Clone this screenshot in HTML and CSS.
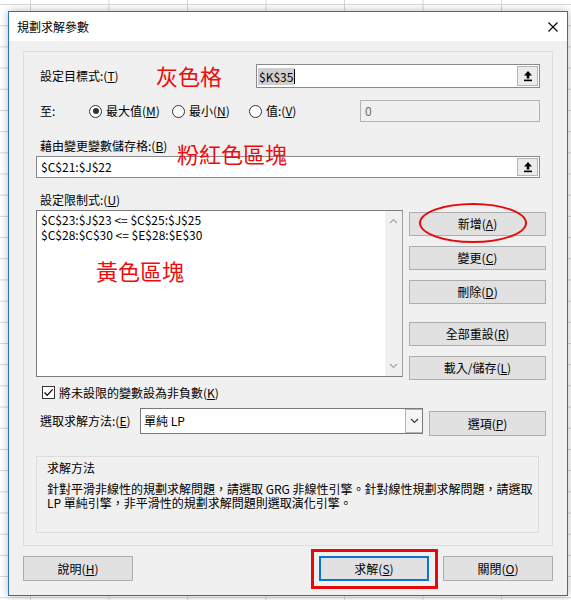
FILE: index.html
```html
<!DOCTYPE html>
<html lang="zh-Hant">
<head>
<meta charset="utf-8">
<title>規劃求解參數</title>
<link rel="stylesheet" href="styles.css">
</head>
<body>
<div class="dialog">
  <div class="titlebar">
    <span class="title">規劃求解參數</span>
    <svg class="close" viewBox="0 0 10 10" aria-hidden="true"><path d="M0.5 0.5 L9.5 9.5 M9.5 0.5 L0.5 9.5" stroke="#000" stroke-width="1.1" fill="none"/></svg>
  </div>
  <div class="body">
    <div class="group">
      <div class="row-target">
        <span class="label-target">設定目標式:(<u>T</u>)</span>
        <div class="refedit target">
          <span class="ref-text tight"><span class="sel">$K$35</span><span class="caret"></span></span>
          <span class="refbtn"><svg viewBox="0 0 10 12" aria-hidden="true"><path d="M5 1 L9 5.5 L6.3 5.5 L6.3 8.5 L3.7 8.5 L3.7 5.5 L1 5.5 Z" fill="#000"/><rect x="1" y="9.6" width="8" height="1.6" fill="#000"/></svg></span>
        </div>
      </div>
      <div class="row-radio">
        <span class="label-to">至:</span>
        <span class="radio r1"><span class="dot checked"></span><span class="rtext">最大值(<u>M</u>)</span></span>
        <span class="radio r2"><span class="dot"></span><span class="rtext">最小(<u>N</u>)</span></span>
        <span class="radio r3"><span class="dot"></span><span class="rtext">值:(<u>V</u>)</span></span>
        <div class="valuebox">0</div>
      </div>
      <div class="caption first">藉由變更變數儲存格:(<u>B</u>)</div>
      <div class="refedit changing">
        <span class="ref-text">$C$21:$J$22</span>
        <span class="refbtn"><svg viewBox="0 0 10 12" aria-hidden="true"><path d="M5 1 L9 5.5 L6.3 5.5 L6.3 8.5 L3.7 8.5 L3.7 5.5 L1 5.5 Z" fill="#000"/><rect x="1" y="9.6" width="8" height="1.6" fill="#000"/></svg></span>
      </div>
      <div class="caption second">設定限制式:(<u>U</u>)</div>
      <div class="constraints">
        <div class="listbox">
          <div class="items">
            <div class="item">$C$23:$J$23 &lt;= $C$25:$J$25</div>
            <div class="item">$C$28:$C$30 &lt;= $E$28:$E$30</div>
          </div>
          <div class="vscroll">
            <svg class="chev" viewBox="0 0 9 6" aria-hidden="true"><path d="M1 5 L4.5 1.5 L8 5" stroke="#a6a6a6" stroke-width="1.2" fill="none"/></svg>
            <svg class="chev" viewBox="0 0 9 6" aria-hidden="true"><path d="M1 1 L4.5 4.5 L8 1" stroke="#a6a6a6" stroke-width="1.2" fill="none"/></svg>
          </div>
        </div>
        <div class="side">
          <div class="btn"><span>新增(<u>A</u>)</span></div>
          <div class="btn gap10"><span>變更(<u>C</u>)</span></div>
          <div class="btn gap10"><span>刪除(<u>D</u>)</span></div>
          <div class="btn gap18"><span>全部重設(<u>R</u>)</span></div>
          <div class="btn gap10"><span>載入/儲存(<u>L</u>)</span></div>
        </div>
      </div>
      <div class="check">
        <span class="box"><svg viewBox="0 0 11 11" aria-hidden="true"><path d="M1.5 5.5 L4.2 8.3 L9.6 2.4" stroke="#000" stroke-width="1.2" fill="none"/></svg></span>
        <span>將未設限的變數設為非負數(<u>K</u>)</span>
      </div>
      <div class="method">
        <span class="label-method">選取求解方法:(<u>E</u>)</span>
        <div class="select">
          <span class="select-text">單純 LP</span>
          <span class="select-arrow"><svg viewBox="0 0 9 6" aria-hidden="true"><path d="M1 1 L4.5 4.5 L8 1" stroke="#333" stroke-width="1.1" fill="none"/></svg></span>
        </div>
        <div class="btn options"><span>選項(<u>P</u>)</span></div>
      </div>
      <div class="desc">
        <div class="desc-title">求解方法</div>
        <div class="desc-text">針對平滑非線性的規劃求解問題，請選取 GRG 非線性引擎。針對線性規劃求解問題，請選取<br>LP 單純引擎，非平滑性的規劃求解問題則選取演化引擎。</div>
      </div>
    </div>
    <div class="footer">
      <div class="btn foot"><span>說明(<u>H</u>)</span></div>
      <div class="foot-right">
        <div class="btn foot default"><span>求解(<u>S</u>)</span></div>
        <div class="btn foot"><span>關閉(<u>O</u>)</span></div>
      </div>
    </div>
  </div>
  <span class="note note-gray">灰色格</span>
  <span class="note note-pink">粉紅色區塊</span>
  <span class="note note-yellow">黃色區塊</span>
  <span class="mark-ellipse"></span>
  <span class="mark-rect"></span>
</div>
</body>
</html>
```
FILE: styles.css
```css
html, body {
  margin: 0;
}
body {
  width: 571px;
  height: 600px;
  box-sizing: border-box;
  padding: 11px 0 0 8px;
  overflow: hidden;
  font-family: "Noto Sans CJK TC", "Noto Sans", sans-serif;
  font-size: 12px;
  color: #000;
  background-color: #fff;
  background-image:
    linear-gradient(to right, #d6d6d6 1px, transparent 1px),
    linear-gradient(to bottom, #d6d6d6 1px, transparent 1px);
  background-size: 78.5px 100%, 100% 21.2px;
  background-position: 30px 0, 0 4px;
}
u { text-decoration: underline; text-underline-offset: 1px; }

.dialog {
  width: 560px;
  height: 585px;
  box-sizing: border-box;
  border: 1px solid #2a6fc6;
  background: #f0f0f0;
  position: relative;
  display: flex;
  flex-direction: column;
  box-shadow: 0 0 8px rgba(0, 0, 0, 0.28);
}
.titlebar {
  flex: none;
  height: 29px;
  background: #fff;
  display: flex;
  align-items: center;
  justify-content: space-between;
  padding: 0 9px 0 8px;
}
.title { line-height: 16px; }
.close { width: 10px; height: 10px; }

.body { padding: 10px 14px 0; }
.group {
  height: 495px;
  box-sizing: border-box;
  border: 1px solid #dcdcdc;
  padding: 12px 6px 0 12px;
  display: flex;
  flex-direction: column;
}

.row-target {
  height: 24px;
  display: flex;
  align-items: center;
}
.label-target {
  width: 220px;
  box-sizing: border-box;
  padding-left: 4px;
  line-height: 16px;
}
.refedit {
  box-sizing: border-box;
  border: 1px solid #8a8a8a;
  background: #fff;
  display: flex;
  align-items: center;
  justify-content: space-between;
}
.refedit.target { width: 284px; height: 24px; }
.refedit.changing { width: 504px; height: 22px; margin-top: 2px; }
.ref-text { padding-left: 4px; line-height: 16px; display: flex; align-items: center; }
.ref-text.tight { padding-left: 1px; }
.sel { background: #cfcfcf; padding: 0 1px 0 1px; line-height: 17px; }
.caret { width: 1px; height: 15px; background: #000; }
.refbtn {
  width: 21px;
  height: calc(100% - 2px);
  margin-right: 1px;
  box-sizing: border-box;
  border: 1px solid #b4b4b4;
  background: #ececec;
  display: flex;
  align-items: center;
  justify-content: center;
}
.refbtn svg { width: 10px; height: 12px; }

.row-radio {
  margin-top: 12px;
  height: 22px;
  display: flex;
  align-items: center;
  line-height: 16px;
}
.label-to { width: 53px; box-sizing: border-box; padding-left: 4px; }
.radio { display: flex; align-items: center; gap: 4px; }
.radio.r1 { width: 83px; }
.radio.r2 { width: 77px; }
.radio.r3 { width: 111px; }
.rtext { white-space: nowrap; }
.dot {
  width: 13px;
  height: 13px;
  box-sizing: border-box;
  border: 1px solid #333;
  border-radius: 50%;
  position: relative;
  background: #fff;
  flex: none;
}
.dot.checked::after {
  content: "";
  position: absolute;
  inset: 2.5px;
  border-radius: 50%;
  background: #333;
}
.valuebox {
  width: 180px;
  height: 22px;
  box-sizing: border-box;
  border: 1px solid #b2b2b2;
  background: #f0f0f0;
  color: #6d6d6d;
  padding-left: 4px;
  line-height: 20px;
}

.caption { height: 16px; line-height: 16px; padding-left: 4px; }
.caption.first { margin-top: 16px; }
.caption.second { margin-top: 14px; }

.constraints {
  margin-top: 2px;
  height: 170px;
  display: flex;
  gap: 6px;
  align-items: flex-start;
}
.listbox {
  width: 367px;
  height: 167px;
  box-sizing: border-box;
  border: 1px solid #7a7a7a;
  border-right-color: #a0a0a0;
  background: #fff;
  display: flex;
}
.items { flex: 1; padding: 1px 0 0 4px; line-height: 15px; }
.vscroll {
  width: 17px;
  background: #f0f0f0;
  display: flex;
  flex-direction: column;
  justify-content: space-between;
  align-items: center;
  padding: 7px 0;
}
.chev { width: 9px; height: 6px; }
.side {
  width: 137px;
  margin-top: 2px;
  display: flex;
  flex-direction: column;
}
.btn {
  box-sizing: border-box;
  height: 24px;
  border: 1px solid #adadad;
  background: #e1e1e1;
  display: flex;
  align-items: center;
  justify-content: center;
  line-height: 16px;
  white-space: nowrap;
}
.gap10 { margin-top: 10px; }
.gap18 { margin-top: 18px; }

.check {
  margin-top: 5px;
  height: 15px;
  display: flex;
  align-items: center;
  gap: 4px;
  padding-left: 6px;
  line-height: 16px;
}
.box {
  width: 13px;
  height: 13px;
  box-sizing: border-box;
  border: 1px solid #333;
  background: #fff;
  display: flex;
  align-items: center;
  justify-content: center;
}
.box svg { width: 11px; height: 11px; }

.method {
  margin-top: 8px;
  height: 28px;
  display: flex;
  align-items: flex-start;
}
.label-method {
  width: 104px;
  box-sizing: border-box;
  padding-left: 4px;
  line-height: 26px;
}
.select {
  width: 283px;
  height: 26px;
  box-sizing: border-box;
  border: 1px solid #7a7a7a;
  background: #fff;
  display: flex;
  justify-content: space-between;
}
.select-text { padding-left: 3px; line-height: 24px; }
.select-arrow {
  width: 17px;
  box-sizing: border-box;
  border: 1px solid #b4b4b4;
  border-right: 0;
  background: #f6f6f6;
  display: flex;
  align-items: center;
  justify-content: center;
}
.select-arrow svg { width: 9px; height: 6px; }
.btn.options { width: 117px; height: 25px; margin: 3px 0 0 6px; }

.desc {
  margin-top: 20px;
  width: 503px;
  height: 77px;
  box-sizing: border-box;
  border: 1px solid #dcdcdc;
  padding: 3px 0 0 10px;
}
.desc-title { line-height: 16px; }
.desc-text { margin-top: 6px; line-height: 14px; white-space: nowrap; }

.footer {
  margin-top: 10px;
  display: flex;
  justify-content: space-between;
}
.foot-right { display: flex; gap: 14px; }
.btn.foot { width: 110px; height: 25px; }
.btn.default { border: 2px solid #0a74d6; }

.note {
  position: absolute;
  font-size: 22px;
  line-height: 22px;
  color: #ee0a0a;
  white-space: nowrap;
}
.note-gray { left: 147px; top: 52px; }
.note-pink { left: 168px; top: 130px; }
.note-yellow { left: 87px; top: 247px; }
.mark-ellipse {
  position: absolute;
  left: 410px;
  top: 191px;
  width: 108px;
  height: 40px;
  box-sizing: border-box;
  border: 2.5px solid #e60a0a;
  border-radius: 50%;
}
.mark-rect {
  position: absolute;
  left: 302px;
  top: 537px;
  width: 127px;
  height: 40px;
  box-sizing: border-box;
  border: 3px solid #e60a0a;
}
```
